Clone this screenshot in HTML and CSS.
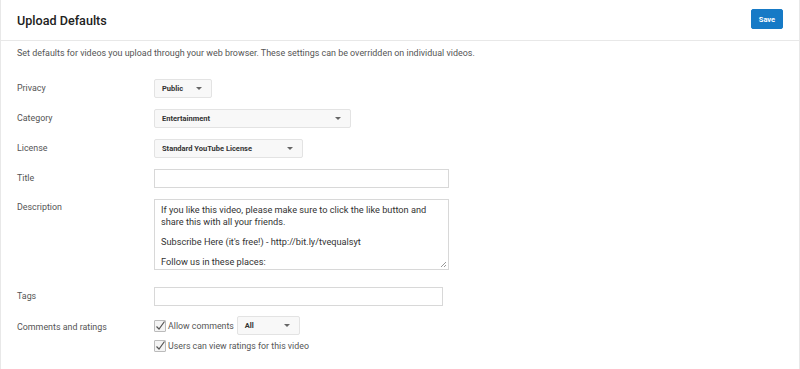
FILE: index.html
```html
<!DOCTYPE html>
<html lang="en">
<head>
    <meta charset="UTF-8">
    <title>Upload Defaults</title>
    <link rel="stylesheet" href="styles.css">
</head>
<body>
    <div class="page">
        <div class="header">
            <h1 class="title">Upload Defaults</h1>
            <button class="save">Save</button>
        </div>
        <div class="content">
            <p class="intro">Set defaults for videos you upload through your web browser. These settings can be overridden on individual videos.</p>

            <div class="row">
                <div class="label">Privacy</div>
                <div class="select privacy">Public<span class="caret"></span></div>
            </div>
            <div class="row">
                <div class="label">Category</div>
                <div class="select category">Entertainment<span class="caret"></span></div>
            </div>
            <div class="row">
                <div class="label">License</div>
                <div class="select license">Standard YouTube License<span class="caret"></span></div>
            </div>
            <div class="row">
                <div class="label">Title</div>
                <div class="input title-input"></div>
            </div>
            <div class="row row-desc">
                <div class="label">Description</div>
                <div class="textarea">
                    <p>If you like this video, please make sure to click the like button and share this with all your friends.</p>
                    <p>Subscribe Here (it's free!) - http://bit.ly/tvequalsyt</p>
                    <p>Follow us in these places:</p>
                    <svg class="grip" width="6" height="6" viewBox="0 0 6 6"><path d="M6 1 L1 6 M6 4 L4 6" stroke="#999" stroke-width="1"/></svg>
                </div>
            </div>
            <div class="row row-tags">
                <div class="label">Tags</div>
                <div class="input tags-input"></div>
            </div>
            <div class="row row-comments">
                <div class="label">Comments and ratings</div>
                <div class="checks">
                    <div class="check-line">
                        <span class="box"><svg width="12" height="12" viewBox="0 0 12 12"><path d="M2.5 6.5 L5 9 L10.5 1.5" fill="none" stroke="#555" stroke-width="1.2"/></svg></span>
                        <span class="check-text">Allow comments</span>
                        <div class="select all">All<span class="caret"></span></div>
                    </div>
                    <div class="check-line">
                        <span class="box"><svg width="12" height="12" viewBox="0 0 12 12"><path d="M2.5 6.5 L5 9 L10.5 1.5" fill="none" stroke="#555" stroke-width="1.2"/></svg></span>
                        <span class="check-text">Users can view ratings for this video</span>
                    </div>
                </div>
            </div>
        </div>
    </div>
</body>
</html>
```

FILE: styles.css
```css
body{
    margin: 0;
    font-family: Roboto, "Liberation Sans", Arial, sans-serif;
    background-color: #fff;
    color: #333;
}
.page{
    width: 800px;
    height: 369px;
    box-sizing: border-box;
    border-left: 1px solid #e8e8e8;
    border-right: 1px solid #e8e8e8;
}
.header{
    height: 40px;
    border-bottom: 1px solid #e8e8e8;
    display: flex;
    align-items: center;
    justify-content: space-between;
    padding: 0 16px 0 16px;
}
.title{
    margin: 0;
    font-size: 12.6px;
    font-weight: 500;
    color: #222;
}
.save{
    background-color: #167ac6;
    border: 1px solid #167ac6;
    border-radius: 2px;
    color: #fff;
    font-family: inherit;
    font-size: 7.5px;
    font-weight: 700;
    width: 32px;
    height: 20px;
    padding: 0;
    margin-top: -2px;
}
.content{
    padding: 7px 16px 0 16px;
}
.intro{
    margin: 0 0 15px 0;
    font-size: 8.93px;
    color: #555;
}
.row{
    display: flex;
    align-items: center;
    height: 30px;
}
.label{
    width: 137px;
    font-size: 8.9px;
    color: #555;
}
/*드롭다운 모양 박스*/
.select{
    display: flex;
    align-items: center;
    justify-content: space-between;
    height: 19px;
    box-sizing: border-box;
    padding: 0 9px 0 7px;
    background-color: #f8f8f8;
    border: 1px solid #e3e3e3;
    border-radius: 2px;
    font-size: 7.5px;
    font-weight: 700;
    color: #333;
}
.caret{
    width: 0;
    height: 0;
    border-left: 3px solid transparent;
    border-right: 3px solid transparent;
    border-top: 3px solid #666;
}
.privacy{ width: 58px; }
.category{ width: 197px; }
.license{ width: 149px; }
.all{ width: 63px; height: 19px; margin-left: 3px; }
.input{
    height: 19px;
    box-sizing: border-box;
    border: 1px solid #d8d8d8;
    background-color: #fff;
}
.title-input{ width: 295px; }
.tags-input{ width: 289px; }
.row-desc{
    align-items: flex-start;
    height: auto;
    padding-top: 6px;
}
.row-desc .label{
    padding-top: 3px;
}
.textarea{
    position: relative;
    width: 295px;
    height: 71px;
    box-sizing: border-box;
    border: 1px solid #d8d8d8;
    padding: 4px 6px;
    font-size: 9.2px;
    line-height: 11.5px;
    color: #333;
    overflow: hidden;
}
.textarea p{
    margin: 0 0 8.5px 0;
}
.grip{
    position: absolute;
    right: 2px;
    bottom: 2px;
}
.row-tags{
    margin-top: 11px;
}
.row-comments{
    align-items: flex-start;
    height: auto;
    padding-top: 5px;
}
.row-comments .label{
    padding-top: 6px;
}
.checks{
    display: flex;
    flex-direction: column;
    gap: 5px;
}
.check-line{
    display: flex;
    align-items: center;
}
.box{
    display: flex;
    width: 12px;
    height: 12px;
    box-sizing: border-box;
    border: 1px solid #bbb;
    background-color: #f4f4f4;
    border-radius: 1px;
}
.box svg{
    margin: -1px;
}
.check-text{
    margin-left: 2px;
    font-size: 8.8px;
    color: #555;
}
```
